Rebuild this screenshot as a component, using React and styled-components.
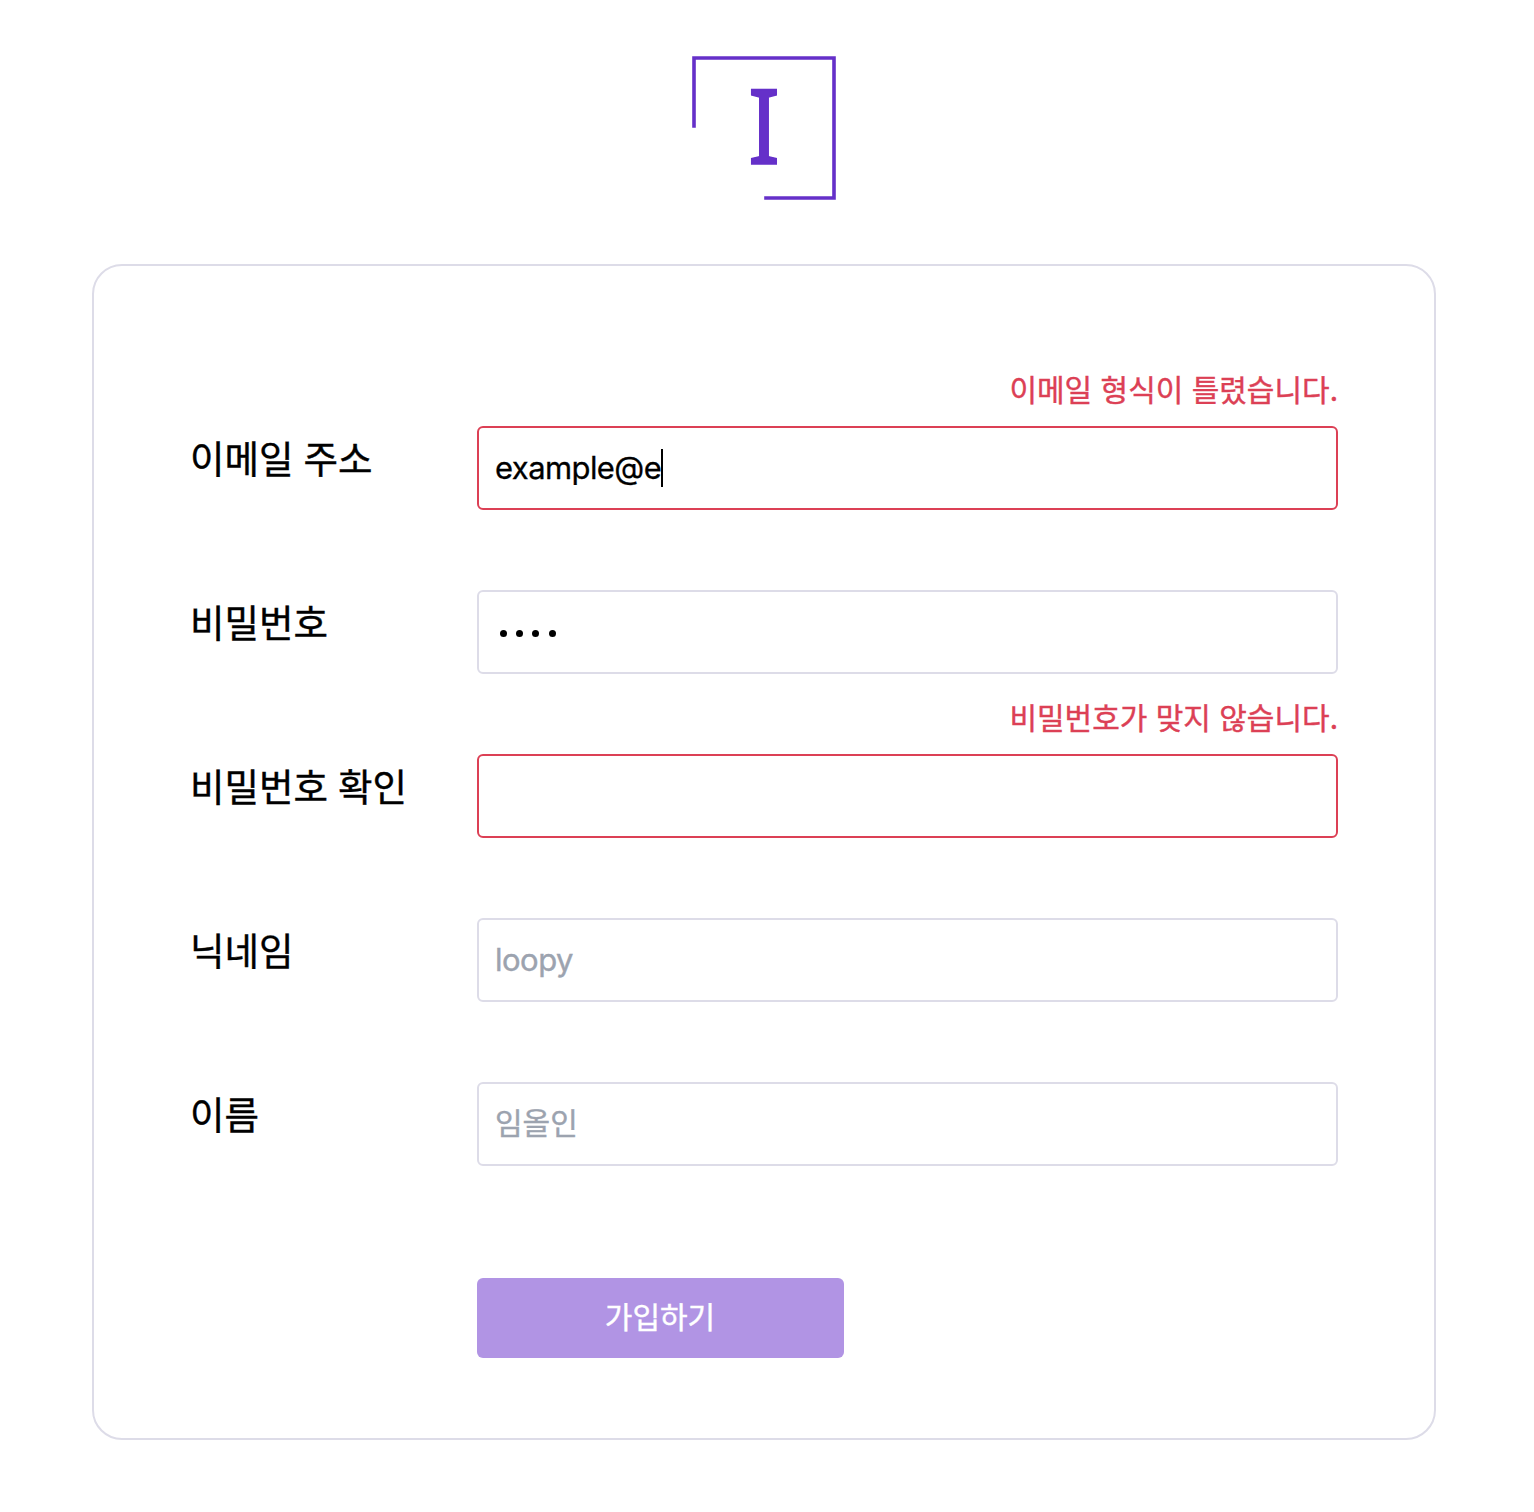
import React from "react";
import styled, { createGlobalStyle, css } from "styled-components";

const Global = createGlobalStyle`
  *, *::before, *::after { box-sizing: border-box; }
  body {
    margin: 0;
    background: #fff;
    color: #000;
    font-family: Inter, "Noto Sans CJK KR", sans-serif;
  }
`;

const Page = styled.main`
  width: 1534px;
  height: 1512px;
  padding: 56px 98px 0 92px;
  display: flex;
  flex-direction: column;
  align-items: center;
`;

const Logo = styled.svg`
  width: 144px;
  height: 144px;
  flex: none;
  overflow: visible;
  font-family: "Noto Sans", sans-serif;
`;

const Card = styled.form`
  width: 1344px;
  height: 1176px;
  margin-top: 64px;
  padding: 80px 96px;
  border: 2px solid #dddce8;
  border-radius: 30px;
`;

const Row = styled.div`
  display: grid;
  grid-template-columns: 287px 861px;
  grid-template-rows: 80px 84px;
`;

const korean = css`
  font-family: "Noto Sans CJK KR", sans-serif;
  white-space: pre;
  word-spacing: 1.6px;
  -webkit-text-stroke: 0.4px currentColor;
`;

const Label = styled.label`
  ${korean}
  grid-column: 1;
  grid-row: 2;
  padding-top: 3px;
  font-size: 37.5px;
  line-height: 56px;
`;

const ErrorText = styled.p`
  ${korean}
  grid-column: 2;
  grid-row: 1;
  margin: 0;
  padding-top: 18px;
  font-size: 30px;
  line-height: 48px;
  text-align: right;
  color: #dc4055;
`;

const Field = styled.div`
  grid-column: 2;
  grid-row: 2;
  display: flex;
  align-items: center;
  padding: 0 16px;
  border: 2px solid ${(p) => (p.$invalid ? "#dc4055" : "#dddce8")};
  border-radius: 6px;
  font-size: 31px;
  white-space: pre;
`;

const Value = styled.span`
  padding-bottom: 2px;
  letter-spacing: -0.58px;
  -webkit-text-stroke: 0.3px currentColor;
`;

const Caret = styled.span`
  width: 2px;
  height: 38px;
  background: #000;
`;

const Password = styled.span`
  display: flex;
  gap: 9.4px;
  padding: 2px 0 0 4.6px;
`;

const Dot = styled.span`
  width: 7px;
  height: 7px;
  border-radius: 50%;
  background: #000;
`;

const Placeholder = styled.span`
  ${(p) => p.$korean && korean}
  padding-bottom: ${(p) => (p.$korean ? 6 : 2)}px;
  font-size: ${(p) => (p.$korean ? 30 : 31)}px;
  letter-spacing: ${(p) => (p.$korean ? 0 : -0.5)}px;
  -webkit-text-stroke: 0.4px currentColor;
  color: #9ca3af;
`;

const Submit = styled.button`
  ${korean}
  display: block;
  width: 367px;
  height: 80px;
  margin: 112px 0 0 287px;
  padding: 0 1px 7px 0;
  border: 0;
  border-radius: 6px;
  background: #b194e4;
  color: #fff;
  font-size: 30px;
`;

function FormRow({ label, error, children }) {
  return (
    <Row>
      {error && <ErrorText>{error}</ErrorText>}
      <Label>{label}</Label>
      <Field $invalid={Boolean(error)}>{children}</Field>
    </Row>
  );
}

export default function App() {
  return (
    <>
      <Global />
      <Page>
        <Logo viewBox="0 0 144 144" role="img">
          <path d="M2 71.7V2H142V142H72.2" fill="none" stroke="#6530c9" strokeWidth="3.6" />
          <text
            transform="translate(72.1 107.7) scale(0.92 1)"
            textAnchor="middle"
            fontSize="104.5"
            fill="#6530c9"
            stroke="#6530c9"
            strokeWidth="1.4"
          >
            I
          </text>
        </Logo>
        <Card>
          <FormRow label="이메일 주소" error="이메일 형식이 틀렸습니다.">
            <Value>example@e</Value>
            <Caret />
          </FormRow>
          <FormRow label="비밀번호">
            <Password>
              {[0, 1, 2, 3].map((i) => (
                <Dot key={i} />
              ))}
            </Password>
          </FormRow>
          <FormRow label="비밀번호 확인" error="비밀번호가 맞지 않습니다." />
          <FormRow label="닉네임">
            <Placeholder>loopy</Placeholder>
          </FormRow>
          <FormRow label="이름">
            <Placeholder $korean>임올인</Placeholder>
          </FormRow>
          <Submit type="button">가입하기</Submit>
        </Card>
      </Page>
    </>
  );
}
